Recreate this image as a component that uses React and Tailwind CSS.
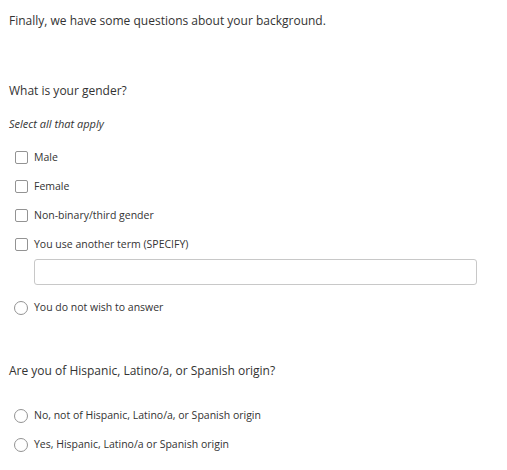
import React from "react";

function Check({ label }) {
  return (
    <label className="flex items-center h-[29px] pl-[15px]">
      <span className="w-[13px] h-[13px] border border-[#939393] rounded-[2px] bg-white shrink-0" />
      <span className="ml-[6px] text-[10.5px] text-[#333]">{label}</span>
    </label>
  );
}

function Radio({ label }) {
  return (
    <label className="flex items-center h-[29px] pl-[14px]">
      <span className="w-[14px] h-[14px] border border-[#939393] rounded-full bg-white shrink-0" />
      <span className="ml-[6px] text-[10.5px] text-[#333]">{label}</span>
    </label>
  );
}

export default function App() {
  return (
    <div
      className="w-[507px] h-[470px] bg-white text-[#333] overflow-hidden"
      style={{ fontFamily: '"Open Sans", "Noto Sans", sans-serif' }}
    >
      <div className="pt-[12px] pl-[9px] text-[12px] leading-[18px]">
        Finally, we have some questions about your background.
      </div>
      <div className="mt-[52px] pl-[9px] text-[12px] leading-[18px]">What is your gender?</div>
      <div className="mt-[17px] pl-[9px] text-[11px] italic leading-[14px]">Select all that apply</div>
      <div className="mt-[12px]">
        <Check label="Male" />
        <Check label="Female" />
        <Check label="Non-binary/third gender" />
        <Check label="You use another term (SPECIFY)" />
      </div>
      <div className="pl-[34px] pr-[30px]">
        <div className="h-[26px] border border-[#c8c8c8] rounded-[3px] bg-white" />
      </div>
      <div className="mt-[8px]">
        <Radio label="You do not wish to answer" />
      </div>
      <div className="mt-[40px] pl-[9px] text-[12px] leading-[18px]">
        Are you of Hispanic, Latino/a, or Spanish origin?
      </div>
      <div className="mt-[21px]">
        <Radio label="No, not of Hispanic, Latino/a, or Spanish origin" />
        <Radio label="Yes, Hispanic, Latino/a or Spanish origin" />
      </div>
    </div>
  );
}
